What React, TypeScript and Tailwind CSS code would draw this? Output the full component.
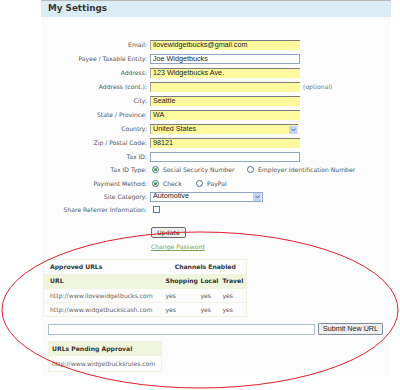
import React from "react";

const LABEL = "font-['DejaVu_Sans',Verdana,sans-serif] text-[6.1px] text-[#555]";
const FIELD = "font-['Liberation_Sans',Arial,sans-serif] text-[7.2px] text-[#222]";

type Row = { label: string; h: string; kind: string; value?: string; note?: string };

const ROWS: Row[] = [
  { label: "Email:", h: "h-[14px]", kind: "yellow", value: "ilovewidgetbucks@gmail.com" },
  { label: "Payee / Taxable Entity:", h: "h-[14px]", kind: "white", value: "Joe Widgetbucks" },
  { label: "Address:", h: "h-[14px]", kind: "yellow", value: "123 Widgetbucks Ave." },
  { label: "Address (cont.):", h: "h-[14px]", kind: "yellow", value: "", note: "(optional)" },
  { label: "City:", h: "h-[14px]", kind: "yellow", value: "Seattle" },
  { label: "State / Province:", h: "h-[14px]", kind: "yellow", value: "WA" },
  { label: "Country:", h: "h-[14px]", kind: "country", value: "United States" },
  { label: "Zip / Postal Code:", h: "h-[14px]", kind: "yellow", value: "98121" },
  { label: "Tax ID:", h: "h-[13px]", kind: "white", value: "" },
  { label: "Tax ID Type:", h: "h-[14px]", kind: "taxtype" },
  { label: "Payment Method:", h: "h-[13px]", kind: "payment" },
  { label: "Site Category:", h: "h-[13px]", kind: "category", value: "Automotive" },
  { label: "Share Referrer Information:", h: "h-[13px]", kind: "check" },
];

function Radio({ on }: { on?: boolean }) {
  return (
    <span className="flex h-[7px] w-[7px] shrink-0 items-center justify-center rounded-full border border-[#4d6d99] bg-white">
      {on && <span className="h-[3px] w-[3px] rounded-full bg-[#2f9a2f]" />}
    </span>
  );
}

function Arrow() {
  return (
    <span className="flex h-[8px] w-[8px] items-center justify-center bg-[#c4d4f2]">
      <svg width="5" height="4" viewBox="0 0 5 4">
        <path d="M0.5 0.8 L2.5 2.8 L4.5 0.8" fill="none" stroke="#4a5f8a" strokeWidth="1" />
      </svg>
    </span>
  );
}

function Control({ row }: { row: Row }) {
  switch (row.kind) {
    case "yellow":
      return (
        <div className="flex items-center">
          <div className={`flex h-[10px] w-[150px] items-center border-t border-l border-t-[#7d7d7d] border-l-[#a8a8a8] bg-[#fdfa9e] px-[2px] ${FIELD}`}>
            {row.value}
          </div>
          {row.note && <span className={`ml-[3px] ${LABEL} text-[#777]`}>{row.note}</span>}
        </div>
      );
    case "white":
      return (
        <div className={`flex h-[10px] w-[150px] items-center border border-[#8fa6c2] bg-white px-[2px] ${FIELD}`}>
          {row.value}
        </div>
      );
    case "country":
      return (
        <div className={`flex h-[10px] w-[148px] items-center justify-between border-t border-l border-t-[#7d7d7d] border-l-[#a8a8a8] bg-[#fdfa9e] pl-[2px] pr-[1px] ${FIELD}`}>
          {row.value}
          <Arrow />
        </div>
      );
    case "category":
      return (
        <div className={`flex h-[10px] w-[113px] items-center justify-between border border-[#8fa6c2] bg-white pl-[2px] pr-[1px] ${FIELD}`}>
          {row.value}
          <Arrow />
        </div>
      );
    case "taxtype":
      return (
        <div className={`flex items-center whitespace-nowrap pl-[2px] ${LABEL}`}>
          <Radio on />
          <span className="ml-[4px] w-[84px]">Social Security Number</span>
          <Radio />
          <span className="ml-[4px]">Employer Identification Number</span>
        </div>
      );
    case "payment":
      return (
        <div className={`flex items-center whitespace-nowrap pl-[2px] ${LABEL}`}>
          <Radio on />
          <span className="ml-[4px] w-[33px]">Check</span>
          <Radio />
          <span className="ml-[4px]">PayPal</span>
        </div>
      );
    default:
      return <span className="ml-[3px] block h-[7px] w-[7px] border border-[#5a7aa8] bg-white" />;
  }
}

export default function App() {
  return (
    <div className="relative h-[390px] w-[400px] overflow-hidden bg-white">
      <div className="ml-[41px] w-[350px] bg-[#fcfcfc] pb-[4px]">
        <div className="flex h-[17px] items-center border-t border-[#b9b9b9] bg-[#dbedf4] pl-[7px]">
          <h1 className="font-['DejaVu_Sans',Verdana,sans-serif] text-[8.8px] font-bold text-[#3a3a3a]">My Settings</h1>
        </div>

        <div className="pt-[21px]">
          {ROWS.map((r) => (
            <div key={r.label} className={`flex items-center ${r.h}`}>
              <span className={`w-[107px] whitespace-nowrap pr-[1px] text-right ${LABEL}`}>{r.label}</span>
              <div className="ml-[2px]">
                <Control row={r} />
              </div>
            </div>
          ))}
        </div>

        <div className="ml-[110px] mt-[11px] flex flex-col items-start">
          <button className="flex h-[11px] w-[35px] items-center justify-center rounded-[2px] border border-[#6b6b6b] bg-[#eeeeee] font-['DejaVu_Sans',Verdana,sans-serif] text-[6.2px] text-[#333]">
            Update
          </button>
          <a className="mt-[4px] h-[10px] font-['DejaVu_Sans',Verdana,sans-serif] text-[6.1px] leading-[10px] text-[#7fa35a] underline">
            Change Password
          </a>
        </div>

        <table className={`ml-[2px] mt-[7px] w-[203px] table-fixed border border-[#eef2e0] ${LABEL}`}>
          <colgroup>
            <col className="w-[121px]" />
            <col className="w-[36px]" />
            <col className="w-[22px]" />
            <col className="w-[24px]" />
          </colgroup>
          <tbody className="whitespace-nowrap">
            <tr className="h-[14px]">
              <td className="pl-[6px] font-bold text-[#333]">Approved URLs</td>
              <td colSpan={3} className="text-center font-bold text-[#333]">Channels Enabled</td>
            </tr>
            <tr className="h-[15px] bg-[#eff5dc] font-bold text-[#333]">
              <td className="pl-[6px]">URL</td>
              <td className="pl-[1px]">Shopping</td>
              <td>Local</td>
              <td>Travel</td>
            </tr>
            <tr className="h-[14px] border-b border-[#f1f4e6]">
              <td className="pl-[6px] text-[#666]">http://www.ilovewidgetbucks.com</td>
              <td className="pl-[1px]">yes</td>
              <td>yes</td>
              <td>yes</td>
            </tr>
            <tr className="h-[14px]">
              <td className="pl-[6px] text-[#666]">http://www.widgetbuckscash.com</td>
              <td className="pl-[1px]">yes</td>
              <td>yes</td>
              <td>yes</td>
            </tr>
          </tbody>
        </table>

        <div className="ml-[7px] mt-[6px] flex items-center">
          <div className="h-[11px] w-[267px] border border-[#a9bdd3] bg-white" />
          <button className={`ml-[3px] flex h-[12px] w-[65px] items-center justify-center rounded-[1px] border border-[#7f8ea3] bg-[#ededed] ${FIELD}`}>
            Submit New URL
          </button>
        </div>

        <div className={`ml-[7px] mt-[6px] w-[114px] whitespace-nowrap border border-[#eef2e0] ${LABEL}`}>
          <div className="flex h-[14px] items-center bg-[#eff5dc] pl-[3px] font-bold text-[#333]">URLs Pending Approval</div>
          <div className="flex h-[15px] items-center pl-[3px] text-[#666]">http://www.widgetbucksrules.com</div>
        </div>
      </div>

      <svg className="pointer-events-none absolute left-0 top-0" width="400" height="390" viewBox="0 0 400 390">
        <ellipse cx="200" cy="310" rx="198" ry="78" fill="none" stroke="#dc1f2c" strokeWidth="1" />
      </svg>
    </div>
  );
}
